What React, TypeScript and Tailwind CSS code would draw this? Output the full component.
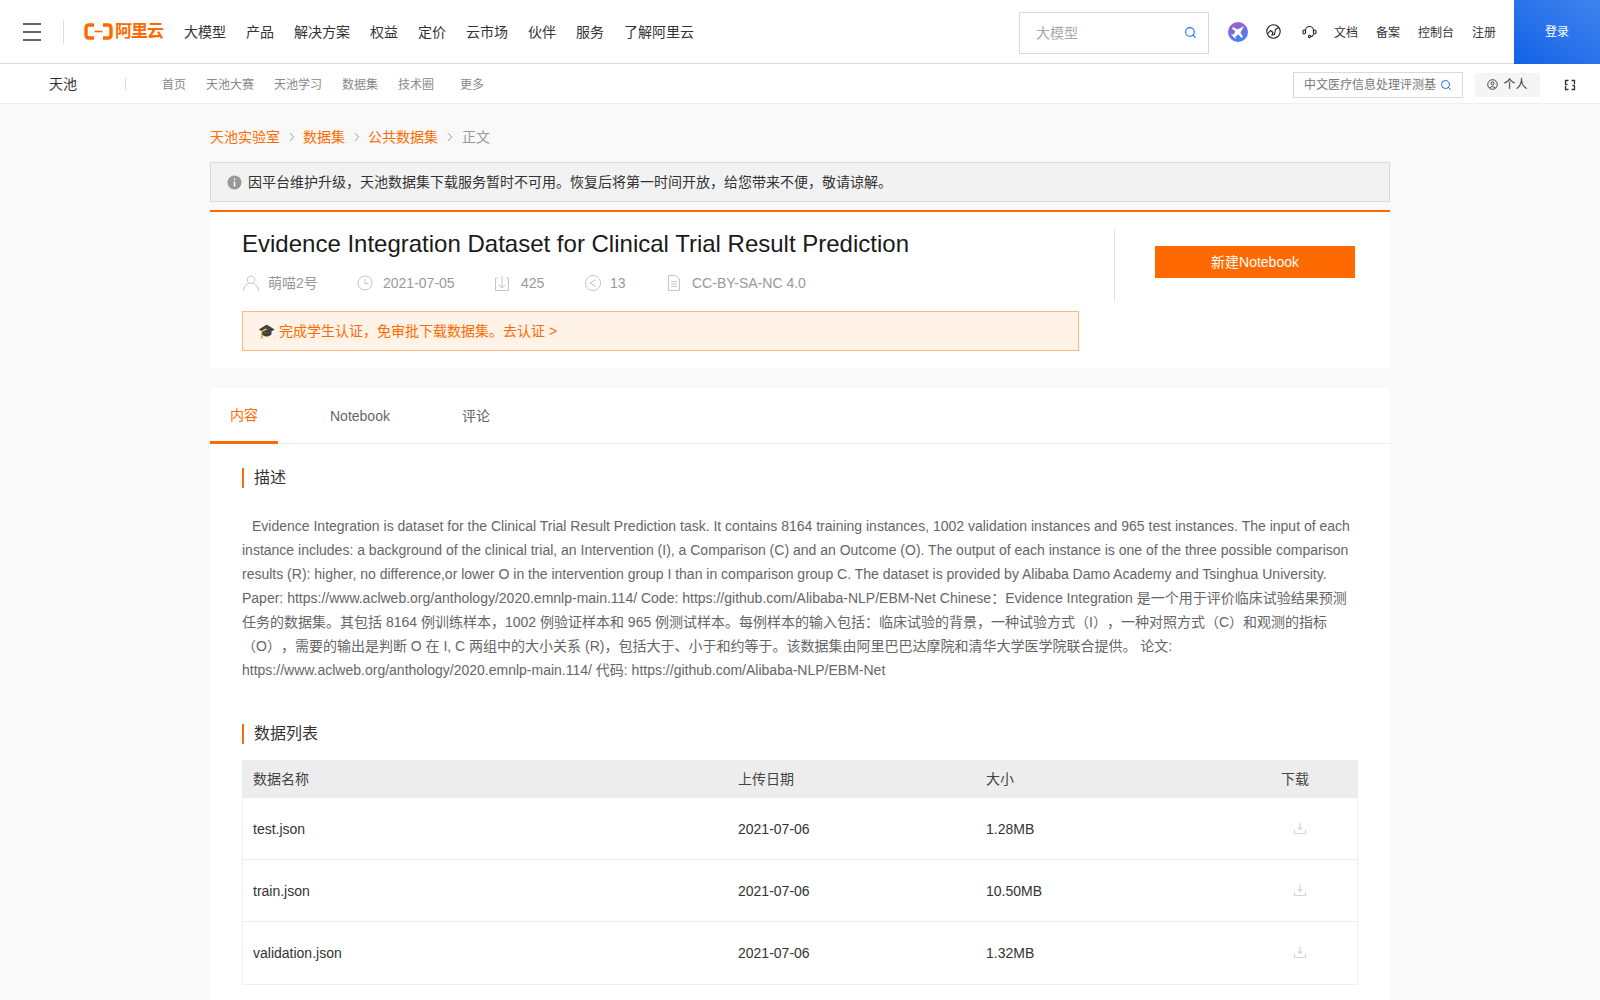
import { Search, ChevronRight } from "lucide-react";

const FONT = "font-['Liberation_Sans','Noto_Sans_CJK_SC',sans-serif] [text-spacing-trim:space-all]";

const mainNav = ["大模型", "产品", "解决方案", "权益", "定价", "云市场", "伙伴", "服务", "了解阿里云"];
const subNav = [
  { label: "首页", w: "w-[44px]" },
  { label: "天池大赛", w: "w-[68px]" },
  { label: "天池学习", w: "w-[68px]" },
  { label: "数据集", w: "w-[56px]" },
  { label: "技术圈", w: "w-[62px]" },
  { label: "更多", w: "w-[44px]" },
];
const rows = [
  { name: "test.json", date: "2021-07-06", size: "1.28MB" },
  { name: "train.json", date: "2021-07-06", size: "10.50MB" },
  { name: "validation.json", date: "2021-07-06", size: "1.32MB" },
];

function Logo() {
  return (
    <div className="flex items-center gap-[2px] text-[#ff6a00]">
      <svg width="29" height="17" viewBox="0 0 29 17" fill="none">
        <path d="M10 2H5Q2 2 2 5V12Q2 15 5 15H10" stroke="currentColor" strokeWidth="3.400" />
        <path d="M19 2H24Q27 2 27 5V12Q27 15 24 15H19" stroke="currentColor" strokeWidth="3.400" />
        <path d="M10.500 8.500H18.500" stroke="currentColor" strokeWidth="1.600" />
      </svg>
      <span className="text-[17px] leading-none font-bold tracking-[-1px]">阿里云</span>
    </div>
  );
}

function Heading({ children }: { children: string }) {
  return <h2 className="border-l-2 border-[#ff6a00] pl-[10px] text-[16px] leading-[20px] text-[#333]">{children}</h2>;
}

function DownloadIcon() {
  return (
    <svg width="14" height="14" viewBox="0 0 14 14" fill="none" stroke="#d4d4d4" strokeWidth="1.200" className="mb-[4px]">
      <path d="M7 1.500V8M5 6.500L7 8.500L9 6.500" />
      <path d="M1.500 9V12.500H12.500V9" />
    </svg>
  );
}

function MetaIcon({ d }: { d: string }) {
  return (
    <svg width="18" height="18" viewBox="0 0 18 18" fill="none" stroke="#c4c4c4" strokeWidth="1" className="shrink-0">
      <path d={d} />
    </svg>
  );
}

export default function App() {
  return (
    <div className={`${FONT} h-[1000px] overflow-hidden bg-[#f9f9f9]`}>
      {/* top bar */}
      <header className="flex h-[64px] items-center border-b border-[#d9d9d9] bg-white">
        <div className="ml-[23px] flex w-[18px] flex-col gap-[6px]">
          <span className="h-[2px] bg-[#666]" />
          <span className="h-[2px] bg-[#666]" />
          <span className="h-[2px] bg-[#666]" />
        </div>
        <span className="ml-[22px] h-[24px] w-px bg-[#ddd]" />
        <div className="ml-[20px]"><Logo /></div>
        <nav className="ml-[21px] mt-[2px] flex gap-[20px] text-[14px] text-[#333]">
          {mainNav.map((n) => <span key={n}>{n}</span>)}
        </nav>
        <div className="ml-auto flex h-full items-center">
          <div className="mt-[2px] flex h-[42px] w-[190px] items-center justify-between border border-[#d9d9d9] pl-[16px] pr-[11px] text-[14px] text-[#aaa]">
            <span className="mt-[1px]">大模型</span>
            <Search size={13} className="text-[#1a6fe8]" />
          </div>
          <svg width="20" height="20" viewBox="0 0 20 20" className="ml-[19px] mt-[1px]">
            <defs>
              <linearGradient id="aiGrad" x1="0.300" y1="0" x2="0.600" y2="1">
                <stop offset="0" stopColor="#a85ccc" />
                <stop offset="1" stopColor="#3d83f5" />
              </linearGradient>
            </defs>
            <circle cx="10" cy="10" r="10" fill="url(#aiGrad)" />
            <path d="M16 4L9.500 7.500L5 5L4 6.500L7.500 9.500L5.500 12.500L3 12.500L5.500 15L7.500 17L7.500 14.500L10.500 12.500L13.500 16L15 15L12.500 10.500L16 4Z" fill="#fff" />
          </svg>
          <svg width="15" height="15" viewBox="0 0 15 15" fill="none" stroke="#222" strokeWidth="1.100" className="ml-[18px]">
            <circle cx="7.500" cy="7.500" r="6.700" />
            <path d="M1.500 10L4.500 6.500L7 8.500L6 11L8.500 10.500L9.500 5.500L12.500 3.500" />
          </svg>
          <svg width="15" height="14" viewBox="0 0 15 14" fill="none" stroke="#222" strokeWidth="1.100" className="ml-[21px]">
            <path d="M3.500 8V5.500a4 4 0 0 1 8 0V8" />
            <rect x="1" y="5" width="2.500" height="4" rx="1.200" />
            <rect x="11.500" y="5" width="2.500" height="4" rx="1.200" />
            <path d="M11.500 9.500Q11 11.500 8.500 11.500" />
            <circle cx="7.500" cy="11.500" r="1.100" />
          </svg>
          <div className="ml-[17px] mt-[2px] flex gap-[18px] text-[12px] text-[#333]">
            <span>文档</span>
            <span>备案</span>
            <span>控制台</span>
            <span>注册</span>
          </div>
          <div className="ml-[18px] flex h-[64px] w-[86px] items-center justify-center bg-gradient-to-tr from-[#0f62e6] to-[#3f83ee] text-[12px] text-white">登录</div>
        </div>
      </header>

      {/* sub nav */}
      <div className="flex h-[40px] items-center border-b border-[#eee] bg-white">
        <span className="ml-[49px] mt-[2px] w-[76px] text-[14px] text-[#333]">天池</span>
        <span className="h-[12px] w-px bg-[#ddd]" />
        <nav className="ml-[36px] mt-[2px] flex text-[12px] text-[#888]">
          {subNav.map((n) => <span key={n.label} className={n.w}>{n.label}</span>)}
        </nav>
        <div className="ml-auto mt-[2px] flex items-center">
          <div className="flex h-[26px] w-[170px] items-center justify-between border border-[#d9d9d9] px-[10px] text-[12px] text-[#777]">
            中文医疗信息处理评测基
            <Search size={12} className="shrink-0 text-[#1a6fe8]" />
          </div>
          <div className="ml-[12px] flex h-[24px] w-[65px] items-center justify-center gap-[5px] bg-[#f5f5f5] text-[12px] text-[#333]">
            <svg width="11" height="11" viewBox="0 0 11 11" fill="none" stroke="#333" strokeWidth="0.900">
              <circle cx="5.500" cy="5.500" r="4.800" />
              <circle cx="5.500" cy="4.300" r="1.500" />
              <path d="M2.800 8.800Q5.500 5.800 8.200 8.800" />
            </svg>
            个人
          </div>
          <svg width="12" height="12" viewBox="0 0 12 12" fill="none" stroke="#333" strokeWidth="1.300" className="ml-[24px] mr-[24px]">
            <path d="M4.500 1.500H1.500V5M7.500 1.500H10.500V5M4.500 10.500H1.500V7M7.500 10.500H10.500V7" />
            <path d="M3.500 5.500H1M8.500 6.500H11" />
          </svg>
        </div>
      </div>

      <main className="mx-auto w-[1180px]">
        {/* breadcrumb */}
        <div className="flex h-[58px] items-center pt-[8px] text-[14px] text-[#ff6a00]">
          <span>天池实验室</span>
          <ChevronRight size={14} strokeWidth={1.500} className="mx-[4.500px] text-[#888]" />
          <span>数据集</span>
          <ChevronRight size={14} strokeWidth={1.500} className="mx-[4.500px] text-[#888]" />
          <span>公共数据集</span>
          <ChevronRight size={14} strokeWidth={1.500} className="mx-[5px] text-[#888]" />
          <span className="text-[#999]">正文</span>
        </div>

        {/* maintenance notice */}
        <div className="flex h-[40px] items-center gap-[6px] border border-[#d9d9d9] bg-[#f2f2f2] pl-[16px] text-[14px] text-[#333]">
          <svg width="15" height="15" viewBox="0 0 15 15" className="shrink-0">
            <circle cx="7.500" cy="7.500" r="7" fill="#999" />
            <path d="M7.500 3.500V5M7.500 6.500V11.500" stroke="#fff" strokeWidth="1.500" />
          </svg>
          因平台维护升级，天池数据集下载服务暂时不可用。恢复后将第一时间开放，给您带来不便，敬请谅解。
        </div>

        {/* dataset head */}
        <section className="mt-[8px] flex h-[158px] border-t-2 border-[#ff6a00] bg-white pl-[32px]">
          <div className="w-[837px]">
            <h1 className="mt-[16px] text-[24px] leading-[32px] text-[#1a1a1a]">Evidence Integration Dataset for Clinical Trial Result Prediction</h1>
            <div className="mt-[11px] flex h-[24px] items-center whitespace-nowrap text-[14px] text-[#999]">
              <MetaIcon d="M9 2a3.800 3.800 0 1 0 .01 0M1.500 17Q2 11 6.500 9.500M16.500 17Q16 11 11.500 9.500" />
              <span className="ml-[8px] w-[50px]">萌喵2号</span>
              <span className="ml-[38px]" />
              <MetaIcon d="M9 2a7 7 0 1 0 .01 0M9 5V9.500H12.500" />
              <span className="ml-[9px] w-[72px]">2021-07-05</span>
              <span className="ml-[38px]" />
              <MetaIcon d="M5 4H2.500V16.500H15.500V4H13M9 2V14M6 11L9 14L12 11" />
              <span className="ml-[10px] w-[25px]">425</span>
              <span className="ml-[38px]" />
              <MetaIcon d="M9 1.500a7.500 7.500 0 1 0 .01 0M12 5.500L6 9L12 12.500" />
              <span className="ml-[8px] w-[16px]">13</span>
              <span className="ml-[39px]" />
              <MetaIcon d="M3.500 1.500H11L14.500 5V16.500H3.500ZM6 7.500H12M6 10H12M6 12.500H12" />
              <span className="ml-[9px]">CC-BY-SA-NC 4.0</span>
            </div>
            <div className="mt-[16px] flex h-[40px] items-center border border-[#ffb878] bg-[#fff2e6] pl-[15px] text-[14px] text-[#ff6a00]">
              <span className="mr-[4px] text-[#333]">🎓</span>完成学生认证，免审批下载数据集。去认证 &gt;
            </div>
          </div>
          <div className="ml-[35px] mt-[17px] h-[73px] w-px bg-[#e3e3e3]" />
          <button className="ml-[40px] mt-[34px] h-[32px] w-[200px] bg-[#ff6a00] text-[14px] text-white">新建Notebook</button>
        </section>

        {/* content */}
        <section className="mt-[20px] bg-white pb-[20px]">
          <div className="flex h-[56px] border-b border-[#eee] text-[14px] text-[#666]">
            <span className="flex h-[56px] w-[68px] items-center justify-center border-b-[3px] border-[#ff6a00] pt-[2px] text-[#ff6a00]">内容</span>
            <span className="ml-[52px] flex items-center pt-[2px]">Notebook</span>
            <span className="ml-[72px] flex items-center pt-[2px]">评论</span>
          </div>
          <div className="px-[32px]">
            <div className="mt-[24px]"><Heading>描述</Heading></div>
            <p className="mt-[26px] h-[168px] indent-[10px] text-[14px] leading-[24px] text-[#666]">
              Evidence Integration is dataset for the Clinical Trial Result Prediction task. It contains 8164 training instances, 1002 validation instances and 965 test instances. The input of each instance includes: a background of the clinical trial, an Intervention (I), a Comparison (C) and an Outcome (O). The output of each instance is one of the three possible comparison results (R): higher, no difference,or lower O in the intervention group I than in comparison group C. The dataset is provided by Alibaba Damo Academy and Tsinghua University. Paper: https://www.aclweb.org/anthology/2020.emnlp-main.114/ Code: https://github.com/Alibaba-NLP/EBM-Net Chinese：Evidence Integration 是一个用于评价临床试验结果预测任务的数据集。其包括 8164 例训练样本，1002 例验证样本和 965 例测试样本。每例样本的输入包括：临床试验的背景，一种试验方式（I），一种对照方式（C）和观测的指标（O），需要的输出是判断 O 在 I, C 两组中的大小关系 (R)，包括大于、小于和约等于。该数据集由阿里巴巴达摩院和清华大学医学院联合提供。 论文: https://www.aclweb.org/anthology/2020.emnlp-main.114/ 代码: https://github.com/Alibaba-NLP/EBM-Net
            </p>
            <div className="mt-[42px]"><Heading>数据列表</Heading></div>
            <div className="mt-[16px] border-x border-b border-[#eee] text-[14px] text-[#333]">
              <div className="-mx-px flex h-[38px] items-center bg-[#ededed] text-[#444]">
                <span className="w-[496px] pl-[11px]">数据名称</span>
                <span className="w-[248px]">上传日期</span>
                <span className="w-[295px]">大小</span>
                <span>下载</span>
              </div>
              {rows.map((r, i) => (
                <div key={r.name} className={`flex h-[62px] items-center ${i < rows.length - 1 ? "border-b border-[#eee] pt-[2px]" : "pt-[1px]"}`}>
                  <span className="w-[495px] pl-[10px]">{r.name}</span>
                  <span className="w-[248px]">{r.date}</span>
                  <span className="w-[307px]">{r.size}</span>
                  <DownloadIcon />
                </div>
              ))}
            </div>
          </div>
        </section>
      </main>
    </div>
  );
}
